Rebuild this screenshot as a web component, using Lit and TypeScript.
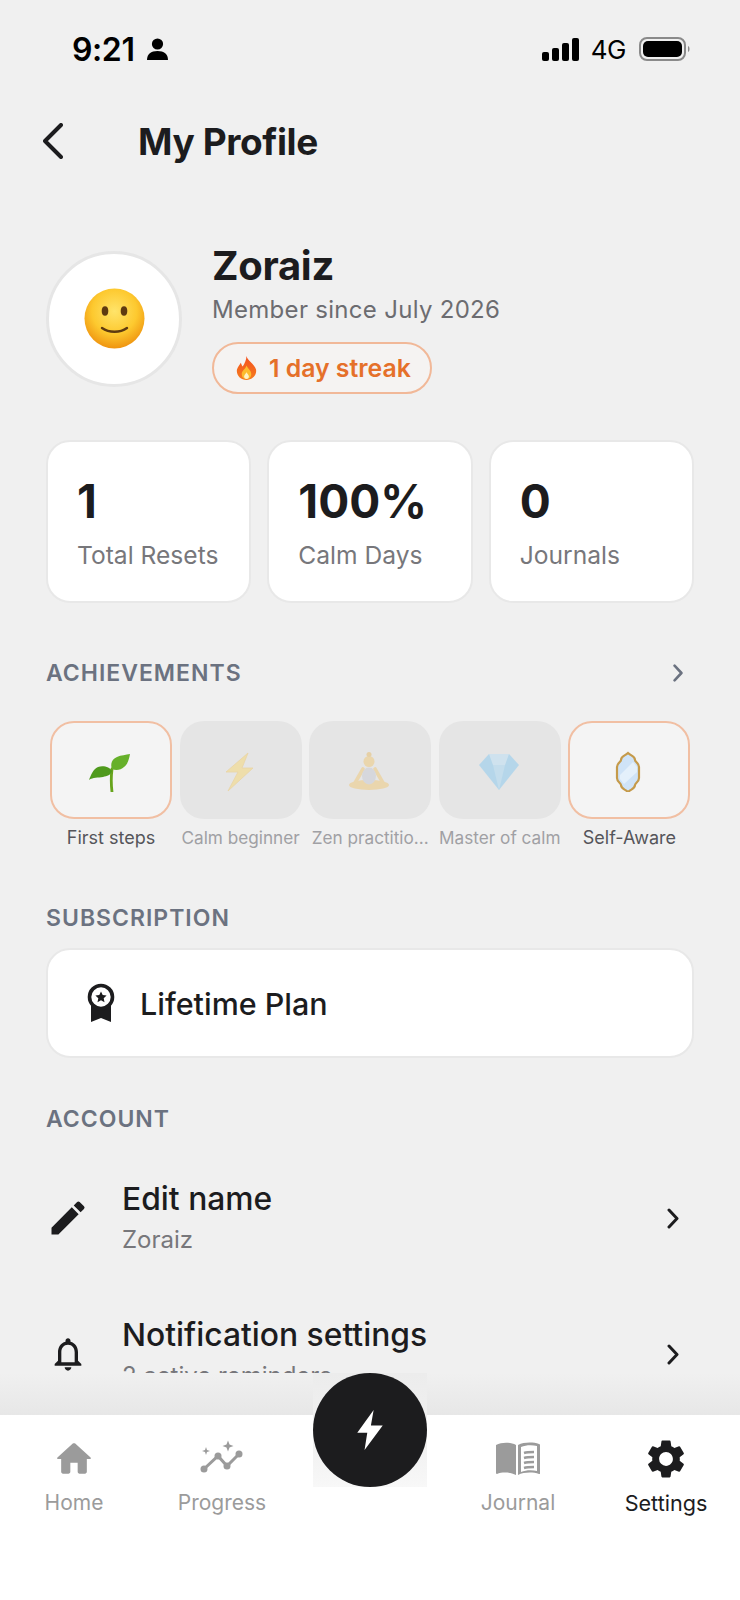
import { LitElement, html, css, svg } from 'lit';
import { customElement } from 'lit/decorators.js';

const chevron = svg`<path d="M3 2l8 8.5L3 19" fill="none" stroke="currentColor" stroke-width="3" stroke-linecap="round" stroke-linejoin="round"/>`;

const achievements = [
  { label: 'First steps', on: true, icon: svg`
    <path d="M23 44c-1-8-1-15 0-23" fill="none" stroke="#67a41c" stroke-width="2.800" stroke-linecap="round"/>
    <path d="M23 23c-2-4-9-6-14-4C4 21 2 27 0 32c4-3 9-2 14-3 4-1 8-2 9-6z" fill="#4f9a1c"/>
    <path d="M23 21c-2-5 0-10 5-12 4-2 9-2 13-3-1 5-2 10-6 13-3 3-8 4-12 2z" fill="#66b02a"/>` },
  { label: 'Calm beginner', on: false, icon: svg`
    <path d="M29 5L7 24h12L9 43l25-23H23z" fill="#fbd765" stroke="#efc25a" stroke-width=".8"/>` },
  { label: 'Zen practitio...', on: false, icon: svg`
    <ellipse cx="21" cy="37" rx="20" ry="5" fill="#f2c46b"/>
    <path d="M15 21L7 35M27 21l8 14" fill="none" stroke="#f2c46b" stroke-width="3.600" stroke-linecap="round"/>
    <ellipse cx="21" cy="28" rx="7" ry="8.500" fill="#c4c8d2"/>
    <circle cx="21" cy="13.500" r="5.500" fill="#f2c46b"/>
    <circle cx="21" cy="6.500" r="2.500" fill="#e8b85a"/>` },
  { label: 'Master of calm', on: false, icon: svg`
    <path d="M11 6h20l10 11-20 25L1 17z" fill="#7cc6f2"/>
    <path d="M11 6h20l-4 11H15z" fill="#b6e0f9"/>
    <path d="M15 17h12l-6 25z" fill="#9dd5f6"/>` },
  { label: 'Self-Aware', on: true, icon: svg`
    <path d="M21 5c3 3 7 3 7 7 0 2 4 3 4 7v11c0 4-4 5-4 7 0 4-4 4-7 7-3-3-7-3-7-7 0-2-4-3-4-7V19c0-4 4-5 4-7 0-4 4-4 7-7z" fill="#cfe3f7" stroke="#c59a4a" stroke-width="2.200"/>
    <path d="M26 14l4 5v5L17 36l-4-5v-4z" fill="#e4f0fb"/>` },
];

@customElement('app-root')
export class AppRoot extends LitElement {
  static styles = css`
    :host {
      display: flex;
      flex-direction: column;
      position: relative;
      width: 740px;
      height: 1600px;
      overflow: hidden;
      background: #f0f0f0;
      color: #1c1c1e;
      font-family: 'Inter', 'Liberation Sans', sans-serif;
    }
    .status {
      height: 98px;
      flex: none;
      display: flex;
      align-items: center;
      padding: 0 49px 0 72px;
      color: #000;
    }
    .time { font-size: 32px; font-weight: 600; letter-spacing: -0.4px; }
    .person { margin-left: 12px; }
    .status-right { margin-left: auto; display: flex; align-items: center; }
    .net { font-size: 26px; margin: 0 13px 0 12px; font-weight: 400; letter-spacing: -0.5px; }
    .header {
      height: 86px;
      flex: none;
      display: flex;
      align-items: center;
      padding-left: 43px;
      gap: 75px;
    }
    h1 { margin: 0; font-size: 37px; font-weight: 700; letter-spacing: -0.4px; }
    .scroll { flex: 1; min-height: 0; overflow: hidden; }
    .profile {
      display: flex;
      align-items: center;
      gap: 30px;
      margin: 59px 46px 0 46px;
    }
    .avatar {
      width: 136px;
      height: 136px;
      box-sizing: border-box;
      border-radius: 50%;
      background: #fff;
      border: 3px solid #e6e6e6;
      display: flex;
      align-items: center;
      justify-content: center;
      flex: none;
    }
    .info { display: flex; flex-direction: column; align-items: flex-start; }
    .name { font-size: 40px; line-height: 46px; font-weight: 700; letter-spacing: -0.3px; }
    .since { font-size: 24px; line-height: 30px; margin-top: 6px; color: #6c6c70; letter-spacing: 0.3px; }
    .streak {
      margin-top: 17px;
      height: 52px;
      width: 220px;
      box-sizing: border-box;
      border: 2px solid #f1b898;
      border-radius: 26px;
      background: #f5f3f2;
      display: flex;
      align-items: center;
      gap: 12px;
      padding-left: 22px;
      color: #e5702a;
      font-size: 24.8px;
      font-weight: 600;
    }
    .stats {
      display: grid;
      grid-template-columns: repeat(3, 1fr);
      gap: 16px;
      margin: 46px 46px 0;
    }
    .stat {
      height: 163px;
      box-sizing: border-box;
      background: #fff;
      border: 2px solid #e8e8e8;
      border-radius: 24px;
      padding: 32px 0 0 29px;
    }
    .stat b { display: block; font-size: 46px; line-height: 54px; font-weight: 700; }
    .stat span { display: block; margin-top: 12px; font-size: 24.6px; line-height: 30px; color: #77777b; }
    .label {
      font-size: 23px;
      line-height: 26px;
      font-weight: 600;
      letter-spacing: 1px;
      color: #6b7280;
      margin: 0 46px;
    }
    .label-row { display: flex; align-items: center; justify-content: space-between; margin: 57px 56px 0 46px; }
    .label-row .label { margin: 0; }
    .tiles {
      display: grid;
      grid-template-columns: repeat(5, 122px);
      column-gap: 7.6px;
      margin: 35px 0 0 50px;
    }
    .tile { display: flex; flex-direction: column; align-items: center; min-width: 0; }
    .box {
      width: 100%;
      height: 98px;
      box-sizing: border-box;
      border-radius: 24px;
      background: #e5e5e5;
      display: flex;
      align-items: center;
      justify-content: center;
    }
    .box svg { opacity: 0.45; }
    .tile.on .box { background: #f4f4f4; border: 2px solid #f1bfa3; }
    .tile.on .box svg { opacity: 1; }
    .tile span {
      margin-top: 9px;
      font-size: 17.2px;
      line-height: 20px;
      white-space: nowrap;
      color: #a0a0a4;
    }
    .tile.on span { color: #55555a; font-size: 18px; }
    .plan {
      height: 110px;
      box-sizing: border-box;
      margin: 17px 46px 0;
      background: #fff;
      border: 2px solid #e8e8e8;
      border-radius: 24px;
      display: flex;
      align-items: center;
      gap: 25px;
      padding-left: 39px;
      font-size: 30.5px;
      font-weight: 500;
    }
    .row {
      height: 136px;
      display: flex;
      align-items: center;
      padding: 0 60px 0 50px;
    }
    .row-icon { width: 36px; flex: none; margin-right: 36px; display: flex; justify-content: center; }
    .row-text { flex: 1; }
    .row-title { font-size: 31.8px; line-height: 36px; font-weight: 500; }
    .row-sub { font-size: 24px; line-height: 30px; margin-top: 8px; color: #77777b; }
    .row > svg { flex: none; color: #1c1c1e; }
    .bottom { flex: none; position: relative; }
    .fade { height: 42px; background: linear-gradient(#f0f0f0, #e7e7e7); }
    .nav {
      height: 185px;
      box-sizing: border-box;
      background: #fff;
      display: grid;
      grid-template-columns: 148px 148px 148px 148px 148px;
      padding-top: 21px;
    }
    .nav-item { display: flex; flex-direction: column; align-items: center; color: #9b9b9b; }
    .nav-item.on { color: #1c1c1e; }
    .nav-icon { height: 46px; display: flex; align-items: center; justify-content: center; }
    .nav-item span { margin-top: 7px; font-size: 21px; line-height: 28px; }
    .nav-item.on span { font-size: 21.6px; }
    .fab-back {
      position: absolute;
      left: 313px;
      top: 0;
      width: 114px;
      height: 114px;
      background: linear-gradient(#ececec, #f2f2f2 70%, #f8f8f8);
    }
    .fab {
      position: absolute;
      left: 313px;
      top: 0;
      width: 114px;
      height: 114px;
      border-radius: 50%;
      background: #1c1c1e;
      display: flex;
      align-items: center;
      justify-content: center;
    }
  `;

  render() {
    return html`
      <div class="status">
        <span class="time">9:21</span>
        <svg class="person" width="21" height="22" viewBox="0 0 21 22">
          <circle cx="10.500" cy="6" r="5.600"/>
          <path d="M0 22c0-6 4-9 10.500-9S21 16 21 22z"/>
        </svg>
        <div class="status-right">
          <svg width="37" height="23" viewBox="0 0 37 23">
            <rect x="0" y="14" width="7" height="9" rx="2"/>
            <rect x="10" y="10" width="7" height="13" rx="2"/>
            <rect x="20" y="5" width="7" height="18" rx="2"/>
            <rect x="30" y="0" width="7" height="23" rx="2"/>
          </svg>
          <span class="net">4G</span>
          <svg width="52" height="24" viewBox="0 0 52 24">
            <rect x="1" y="1" width="45" height="22" rx="7" fill="none" stroke="#8a8a8a" stroke-width="2"/>
            <rect x="4" y="4" width="39" height="16" rx="5"/>
            <path d="M49 9c2 .5 2 5.500 0 6z" fill="#8a8a8a"/>
          </svg>
        </div>
      </div>

      <div class="header">
        <svg width="20" height="36" viewBox="0 0 20 36">
          <path d="M18 2L2 18l16 16" fill="none" stroke="#1c1c1e" stroke-width="4" stroke-linecap="round" stroke-linejoin="round"/>
        </svg>
        <h1>My Profile</h1>
      </div>

      <div class="scroll">
        <div class="profile">
          <div class="avatar">
            <svg width="61" height="61" viewBox="0 0 61 61">
              <defs>
                <radialGradient id="face" cx="50%" cy="38%" r="62%">
                  <stop offset="0" stop-color="#ffe46a"/>
                  <stop offset=".6" stop-color="#fdc92f"/>
                  <stop offset="1" stop-color="#ef9410"/>
                </radialGradient>
              </defs>
              <circle cx="30.500" cy="30.500" r="30" fill="url(#face)"/>
              <ellipse cx="21" cy="23" rx="3.300" ry="4.800" fill="#5e3a10"/>
              <ellipse cx="40" cy="23" rx="3.300" ry="4.800" fill="#5e3a10"/>
              <path d="M18 40c7 5 18 5 25 0" fill="none" stroke="#5e3a10" stroke-width="2.400" stroke-linecap="round"/>
            </svg>
          </div>
          <div class="info">
            <div class="name">Zoraiz</div>
            <div class="since">Member since July 2026</div>
            <div class="streak">
              <svg width="21" height="24" viewBox="0 0 22 25">
                <defs>
                  <linearGradient id="flame" x1="0" y1="0" x2="0" y2="1">
                    <stop offset="0" stop-color="#f4511e"/>
                    <stop offset="1" stop-color="#f57c1f"/>
                  </linearGradient>
                </defs>
                <path d="M11 0c1 5 8 8 10 14 1 6-4 11-10 11S0 20 1 14c1-3 3-5 4-7 1 2 1 3 2 4 2-3 4-7 4-11z" fill="url(#flame)"/>
                <path d="M11 10c1 3 5 5 5 9 0 3-2 5-5 5s-5-2-5-5c0-4 4-5 5-9z" fill="#fdbb2d"/>
                <path d="M11 17c1 2 2.500 3 2.500 4.500S12.500 24 11 24s-2.500-1-2.500-2.500S10 19 11 17z" fill="#fff2c4"/>
              </svg>
              1 day streak
            </div>
          </div>
        </div>

        <div class="stats">
          <div class="stat"><b>1</b><span>Total Resets</span></div>
          <div class="stat"><b>100%</b><span>Calm Days</span></div>
          <div class="stat"><b>0</b><span>Journals</span></div>
        </div>

        <div class="label-row">
          <div class="label">ACHIEVEMENTS</div>
          <svg width="12" height="18" viewBox="0 0 14 21" style="color:#6b7280">${chevron}</svg>
        </div>
        <div class="tiles">
          ${achievements.map(a => html`
            <div class="tile ${a.on ? 'on' : ''}">
              <div class="box"><svg width="44" height="44" viewBox="0 0 44 44">${a.icon}</svg></div>
              <span>${a.label}</span>
            </div>`)}
        </div>

        <div class="label" style="margin-top:57px">SUBSCRIPTION</div>
        <div class="plan">
          <svg width="28" height="40" viewBox="0 0 28 40">
            <path d="M4 20v19l10-4 10 4V20z" fill="#1c1c1e"/>
            <circle cx="14" cy="14" r="11.500" fill="#fff" stroke="#1c1c1e" stroke-width="3.600"/>
            <path d="M14 8.500l1.700 3.600 3.900.5-2.900 2.700.8 3.900-3.500-1.900-3.500 1.900.8-3.900-2.900-2.700 3.900-.5z" fill="#1c1c1e"/>
          </svg>
          Lifetime Plan
        </div>

        <div class="label" style="margin-top:48px">ACCOUNT</div>
        <div style="margin-top:18px">
          <div class="row">
            <div class="row-icon">
              <svg width="44" height="44" viewBox="0 0 24 24" style="flex:none">
                <path fill="#1c1c1e" d="M3 17.250V21h3.750L17.810 9.940l-3.750-3.750L3 17.250zM20.710 7.040a1 1 0 0 0 0-1.410l-2.340-2.340a1 1 0 0 0-1.410 0l-1.830 1.830 3.750 3.750 1.830-1.830z"/>
              </svg>
            </div>
            <div class="row-text">
              <div class="row-title">Edit name</div>
              <div class="row-sub">Zoraiz</div>
            </div>
            <svg width="14" height="21" viewBox="0 0 14 21">${chevron}</svg>
          </div>
          <div class="row">
            <div class="row-icon">
              <svg width="40" height="40" viewBox="0 0 24 24" style="flex:none">
                <path fill="#1c1c1e" d="M12 22c1.100 0 2-.9 2-2h-4c0 1.100.9 2 2 2zm6-6v-5c0-3.070-1.630-5.640-4.500-6.320V4c0-.83-.67-1.500-1.500-1.500s-1.500.67-1.500 1.500v.68C7.640 5.360 6 7.920 6 11v5l-2 2v1h16v-1l-2-2zm-2 1H8v-6c0-2.480 1.510-4.500 4-4.500s4 2.020 4 4.500v6z"/>
              </svg>
            </div>
            <div class="row-text">
              <div class="row-title">Notification settings</div>
              <div class="row-sub">2 active reminders</div>
            </div>
            <svg width="14" height="21" viewBox="0 0 14 21">${chevron}</svg>
          </div>
        </div>
      </div>

      <div class="bottom">
        <div class="fade"></div>
        <div class="nav">
          <div class="nav-item">
            <div class="nav-icon">
              <svg width="44" height="44" viewBox="0 0 24 24"><path fill="currentColor" d="M10 19v-5h4v5c0 .55.45 1 1 1h3c.55 0 1-.45 1-1v-7h1.700c.46 0 .68-.57.33-.87L12.670 3.600c-.38-.34-.96-.34-1.340 0l-8.360 7.530c-.34.3-.13.87.33.87H5v7c0 .55.45 1 1 1h3c.55 0 1-.45 1-1z"/></svg>
            </div>
            <span>Home</span>
          </div>
          <div class="nav-item">
            <div class="nav-icon">
              <svg width="44" height="44" viewBox="0 0 44 44" fill="currentColor">
                <path d="M4 32l14-13 9 10 12-12" fill="none" stroke="currentColor" stroke-width="3"/>
                <circle cx="4" cy="32" r="3.500"/><circle cx="18" cy="19" r="3.500"/><circle cx="27" cy="29" r="3.500"/><circle cx="39" cy="17" r="3.500"/>
                <path d="M28 3.500l1.500 4 4 1.500-4 1.500-1.500 4-1.500-4-4-1.500 4-1.500zM6 10l1 3 3 1-3 1-1 3-1-3-3-1 3-1z"/>
              </svg>
            </div>
            <span>Progress</span>
          </div>
          <div></div>
          <div class="nav-item">
            <div class="nav-icon">
              <svg width="44" height="36" viewBox="0 0 44 36">
                <path fill="currentColor" d="M0 4c6-3 14-3 20 0v30c-6-3-14-3-19-1-1 0-1-1-1-1z"/>
                <path fill="currentColor" d="M22 4c6-3 15-3 21-1 1 0 1 1 1 1v28c0 1 0 1-1 1-6-2-15-2-21 1z"/>
                <path d="M25 6c5-2 11-2 16-1v25c-5-1-11-1-16 1z" fill="#fff"/>
                <path d="M28 12c3-1 7-1 10-1M28 17c3-1 7-1 10-1M28 22c3-1 7-1 10-1M28 27c3-1 7-1 10-1" stroke="currentColor" stroke-width="2.400" fill="none"/>
              </svg>
            </div>
            <span>Journal</span>
          </div>
          <div class="nav-item on">
            <div class="nav-icon">
              <svg width="46" height="46" viewBox="0 0 24 24"><path fill="currentColor" d="M19.140 12.940c.04-.3.06-.61.06-.94 0-.32-.02-.64-.07-.94l2.030-1.580a.49.49 0 0 0 .12-.61l-1.920-3.320a.49.49 0 0 0-.59-.22l-2.390.96c-.5-.38-1.030-.7-1.620-.94l-.36-2.540a.48.48 0 0 0-.48-.41h-3.840a.47.47 0 0 0-.47.41l-.36 2.540c-.59.24-1.130.57-1.620.94l-2.390-.96a.48.48 0 0 0-.59.22L2.740 8.870c-.12.21-.08.47.12.61l2.030 1.580c-.05.3-.09.63-.09.94s.02.64.07.94l-2.030 1.580a.49.49 0 0 0-.12.61l1.920 3.320c.12.22.37.29.59.22l2.390-.96c.5.38 1.030.7 1.620.94l.36 2.540c.05.24.24.41.48.41h3.840c.24 0 .44-.17.47-.41l.36-2.540c.59-.24 1.130-.56 1.620-.94l2.390.96c.22.08.47 0 .59-.22l1.920-3.320c.12-.22.07-.47-.12-.61l-2.010-1.580zM12 15.600A3.610 3.610 0 0 1 8.400 12c0-1.980 1.620-3.600 3.600-3.600s3.600 1.620 3.600 3.600-1.620 3.600-3.600 3.600z"/></svg>
            </div>
            <span>Settings</span>
          </div>
        </div>
        <div class="fab-back"></div>
        <div class="fab">
          <svg width="26" height="40" viewBox="0 0 28 44"><path d="M18 0L0 25h11L8 44l20-27H15z" fill="#fff"/></svg>
        </div>
      </div>
    `;
  }
}
